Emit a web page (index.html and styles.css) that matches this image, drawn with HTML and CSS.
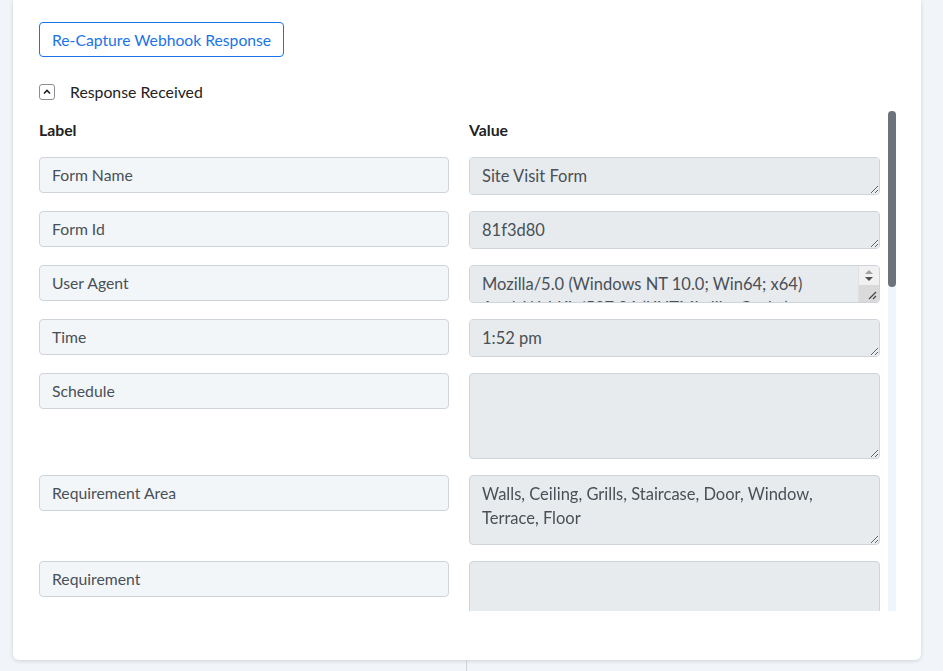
FILE: index.html
```html
<!DOCTYPE html>
<html>

<head>
  <title>Webhook Response</title>
  <link rel="stylesheet" href="styles.css">
</head>

<body>
  <div class="page">
    <div class="card">
      <button class="recapture">Re-Capture Webhook Response</button>

      <div class="toggle">
        <span class="toggleIcon">
          <svg width="8" height="6" viewBox="0 0 8 6"><path d="M1 4.5 L4 1.5 L7 4.5" fill="none" stroke="#222" stroke-width="1.6" /></svg>
        </span>
        <span>Response Received</span>
      </div>

      <div class="scrollArea">
        <div class="fields">
          <div class="head">Label</div>
          <div class="head">Value</div>

          <input class="label" readonly value="Form Name" />
          <textarea class="value" readonly rows="1">Site Visit Form</textarea>

          <input class="label" readonly value="Form Id" />
          <textarea class="value" readonly rows="1">81f3d80</textarea>

          <input class="label" readonly value="User Agent" />
          <div class="scrolled">
            <textarea class="value withBar" readonly rows="1">Mozilla/5.0 (Windows NT 10.0; Win64; x64) AppleWebKit/537.36 (KHTML, like Gecko) Chrome/120.0.0.0 Safari/537.36</textarea>
            
            <div class="miniBar">
              <div class="miniButtons">
                <span class="arrowUp"></span>
                <span class="arrowDown"></span>
              </div>
              <div class="miniThumb">
                <svg width="9" height="9" viewBox="0 0 9 9"><path d="M1 8 L8 1 M5 8 L8 5" stroke="#444" stroke-width="1.2" /></svg>
              </div>
            </div>
          </div>

          <input class="label" readonly value="Time" />
          <textarea class="value" readonly rows="1">1:52 pm</textarea>

          <input class="label" readonly value="Schedule" />
          <textarea class="value tall" readonly></textarea>

          <input class="label" readonly value="Requirement Area" />
          <textarea class="value double" readonly>Walls, Ceiling, Grills, Staircase, Door, Window, Terrace, Floor</textarea>

          <input class="label" readonly value="Requirement" />
          <textarea class="value tall" readonly></textarea>

          <input class="label" readonly value="Name" />
          <textarea class="value" readonly rows="1">Rahul Mehta</textarea>

          <input class="label" readonly value="Phone" />
          <textarea class="value" readonly rows="1">9876543210</textarea>

          <input class="label" readonly value="Email" />
          <textarea class="value" readonly rows="1">rahul.mehta@example.com</textarea>
        </div>

        <div class="track">
          <div class="thumb"></div>
        </div>
      </div>
    </div>
    <div class="connector"></div>
  </div>
</body>

</html>
```

FILE: styles.css
```css
body {
  margin: 0;
  background: #f1f4f8;
  font-family: Lato, "Open Sans", sans-serif;
  color: #222;
  overflow: hidden;
}

.page {
  padding: 0 22px 0 13px;
}

.card {
  background: #fff;
  border-radius: 0 0 6px 6px;
  box-shadow: 0 1px 4px rgba(0, 0, 0, 0.14);
  padding: 22px 25px 49px 26px;
}

.recapture {
  height: 35px;
  padding: 0 12px;
  background: #fff;
  border: 1px solid #1a73e8;
  border-radius: 4px;
  color: #1a73e8;
  font-family: inherit;
  font-size: 15.7px;
}

.toggle {
  display: flex;
  align-items: center;
  gap: 15px;
  margin-top: 25px;
  font-size: 15.8px;
}

.toggleIcon {
  width: 14px;
  height: 14px;
  border: 1px solid #8a8f96;
  border-radius: 3px;
  display: flex;
  align-items: center;
  justify-content: center;
}

/* fields list with a drawn scrollbar on the right */
.scrollArea {
  display: flex;
  height: 500px;
  margin-top: 10px;
}

.fields {
  flex: 1;
  display: grid;
  grid-template-columns: 410px 411px;
  column-gap: 20px;
  row-gap: 16px;
  align-items: start;
  align-content: start;
  overflow: hidden;
}

.track {
  width: 8px;
  background: #eef5fd;
}

.thumb {
  height: 176px;
  background: #6c737c;
  border-radius: 4px;
}

.head {
  font-size: 15.8px;
  font-weight: 700;
  line-height: 20px;
  padding: 9px 0 1px;
}

.label,
.value {
  display: block;
  box-sizing: border-box;
  width: 100%;
  margin: 0;
  border: 1px solid #cfd4da;
  border-radius: 4px;
  padding: 5px 12px 7px;
  font-family: inherit;
  color: #495057;
  outline: none;
}

.label {
  height: 36px;
  background: #f3f6f9;
  font-size: 15.75px;
  line-height: 22px;
}

.value {
  height: 38px;
  padding-top: 5.5px;
  background: #e8ebee;
  font-size: 16.5px;
  line-height: 24px;
  resize: vertical;
}

.value.tall {
  height: 86px;
}

.value.double {
  height: 70px;
}

.scrolled {
  position: relative;
}

.value.withBar {
  padding-right: 34px;
  resize: none;
}

.miniBar {
  position: absolute;
  top: 1px;
  right: 1px;
  bottom: 1px;
  width: 20px;
  display: flex;
  flex-direction: column;
  border-radius: 0 3px 3px 0;
  overflow: hidden;
  border-left: 1px solid #dfe1e3;
}

.miniButtons {
  height: 19px;
  background: #f1f1f1;
  display: flex;
  flex-direction: column;
  align-items: center;
  justify-content: center;
  gap: 3px;
}

.arrowUp,
.arrowDown {
  width: 0;
  height: 0;
  border-left: 4px solid transparent;
  border-right: 4px solid transparent;
}

.arrowUp {
  border-bottom: 4px solid #a3a3a3;
}

.arrowDown {
  border-top: 4px solid #505050;
}

.miniThumb {
  flex: 1;
  background: #dadada;
  display: flex;
  justify-content: flex-end;
  align-items: flex-end;
  padding: 0 2px 2px 0;
}

.miniThumb svg {
  display: block;
}

.connector {
  width: 1px;
  height: 12px;
  margin-left: 453px;
  background: #cfd3d8;
}
```
